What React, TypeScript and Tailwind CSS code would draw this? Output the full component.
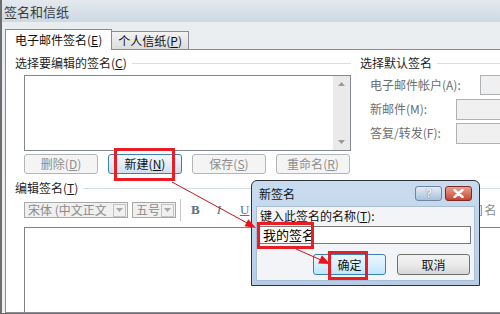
import React from 'react';

const FONT = { fontFamily: '"SimSun", "Noto Sans CJK SC", "Liberation Sans", sans-serif' };

const Mn: React.FC<{ k: string }> = ({ k }) => (
  <span>
    (<span className="underline">{k}</span>)
  </span>
);

const GroupLabel: React.FC<{ text: string; k?: string }> = ({ text, k }) => (
  <div className="flex items-center h-[14px]">
    <span className="text-[12px] leading-[14px] text-[#1e1e1e] whitespace-nowrap">
      {text}
      {k && <Mn k={k} />}
    </span>
    <div className="flex-1 h-px bg-[#d5dfe5] ml-[5px]" />
  </div>
);

const WinButton: React.FC<{ label: string; k: string; disabled?: boolean; primary?: boolean }> = ({ label, k, disabled, primary }) => (
  <div
    className={
      'w-[74px] h-[20px] rounded-[3px] border flex items-center justify-center text-[12px] leading-none whitespace-nowrap ' +
      (disabled
        ? 'border-[#b2b6b9] bg-[#f4f4f4] text-[#8d8d8d]'
        : primary
          ? 'border-[#3c7fb1] bg-gradient-to-b from-[#f4f9fd] via-[#e3eef8] to-[#cfe0ee] text-[#111]'
          : 'border-[#707070] bg-gradient-to-b from-[#f2f2f2] via-[#ebebeb] to-[#d6d6d6] text-[#111]')
    }
  >
    {label}
    <Mn k={k} />
  </div>
);

const ComboArrow: React.FC = () => (
  <div className="w-[13px] h-[13px] border border-[#c4c4c4] bg-[#f0f0f0] flex items-center justify-center">
    <svg width="7" height="4" viewBox="0 0 7 4">
      <polygon points="0,0 7,0 3.5,4" fill="#a8a8a8" />
    </svg>
  </div>
);

export default function App() {
  return (
    <div
      className="relative w-[500px] h-[314px] overflow-hidden bg-[#eef0f2] border-l-2 border-b border-[#6e6e6e] flex flex-col"
      style={FONT}
    >
      {/* window title */}
      <div className="h-[22px] shrink-0 bg-gradient-to-b from-[#e3e9ef] to-[#cdd8e3] flex items-center pl-[2px]">
        <span className="text-[13px] text-[#3b3b3b] leading-none">签名和信纸</span>
      </div>

      <div className="flex-1 flex flex-col pl-[3px] pt-[7px] bg-gradient-to-b from-[#eaedf0] to-[#f0f0f0] min-h-0">
        {/* tabs */}
        <div className="flex items-end h-[21px] shrink-0 relative z-10">
          <div className="h-[21px] bg-white border border-b-0 border-[#898c95] px-[9px] flex items-center text-[12px] text-[#111] whitespace-nowrap">
            电子邮件签名
            <Mn k="E" />
          </div>
          <div className="h-[18px] mb-px border border-l-0 border-b-0 border-[#898c95] bg-gradient-to-b from-[#f3f3f3] to-[#dcdcdc] px-[6px] flex items-center text-[12px] text-[#111] whitespace-nowrap">
            个人信纸
            <Mn k="P" />
          </div>
        </div>

        {/* tab panel */}
        <div className="-mt-px w-[530px] flex-1 bg-white border border-[#898c95] flex flex-col pt-[6px] min-h-0">
          <div className="flex">
            {/* left: signatures */}
            <div className="w-[345px] pl-[9px] flex flex-col shrink-0">
              <GroupLabel text="选择要编辑的签名" k="C" />
              <div className="ml-[9px] mt-[5px] h-[76px] border border-[#828790] flex">
                <div className="flex-1" />
                <div className="w-[17px] bg-[#eaeaea] flex flex-col justify-between items-center py-[6px]">
                  <svg width="7" height="4" viewBox="0 0 7 4">
                    <polygon points="3.5,0 7,4 0,4" fill="#9a9a9a" />
                  </svg>
                  <svg width="7" height="4" viewBox="0 0 7 4">
                    <polygon points="0,0 7,0 3.5,4" fill="#9a9a9a" />
                  </svg>
                </div>
              </div>
              <div className="ml-[9px] mt-[3px] flex gap-[10px]">
                <WinButton label="删除" k="D" disabled />
                <WinButton label="新建" k="N" primary />
                <WinButton label="保存" k="S" disabled />
                <WinButton label="重命名" k="R" disabled />
              </div>
            </div>

            {/* right: defaults */}
            <div className="ml-[9px] flex-1 flex flex-col">
              <GroupLabel text="选择默认签名" />
              <div className="pl-[10px] mt-[5px] flex flex-col gap-[4px] text-[12px] text-[#6d6d6d]">
                <div className="flex items-center h-[20px]">
                  <span className="w-[110px] whitespace-nowrap">电子邮件帐户(A):</span>
                  <div className="h-[20px] w-[100px] border border-[#adb2b5] bg-[#f0f0f0]" />
                </div>
                <div className="flex items-center h-[20px]">
                  <span className="w-[86px] whitespace-nowrap">新邮件(M):</span>
                  <div className="h-[21px] w-[100px] border border-[#adb2b5] bg-[#f0f0f0]" />
                </div>
                <div className="flex items-center h-[20px]">
                  <span className="w-[86px] whitespace-nowrap">答复/转发(F):</span>
                  <div className="h-[21px] w-[100px] border border-[#adb2b5] bg-[#f0f0f0]" />
                </div>
              </div>
            </div>
          </div>

          {/* edit signature */}
          <div className="pl-[9px] mt-[7px]">
            <GroupLabel text="编辑签名" k="T" />
          </div>
          <div className="ml-[18px] mt-[7px] h-[16px] flex items-center text-[12px]">
            <div className="w-[104px] h-[16px] border border-[#a9a9a9] bg-[#f0f0f0] flex items-center justify-between pl-[3px] pr-px text-[#8a8a8a] whitespace-nowrap overflow-hidden">
              <span>宋体 (中文正文</span>
              <ComboArrow />
            </div>
            <div className="ml-[4px] w-[44px] h-[16px] border border-[#a9a9a9] bg-[#f0f0f0] flex items-center justify-between pl-[3px] pr-px text-[#8a8a8a]">
              <span>五号</span>
              <ComboArrow />
            </div>
            <div className="ml-[4px] w-px h-[22px] bg-[#c9c9c9]" />
            <span className="ml-[10px] text-[13px] font-bold text-[#5a6d93]" style={{ fontFamily: '"Liberation Serif", serif' }}>B</span>
            <span className="ml-[17px] text-[13px] italic text-[#5a6d93]" style={{ fontFamily: '"Liberation Serif", serif' }}>I</span>
            <span className="ml-[19px] text-[13px] underline text-[#5a6d93]" style={{ fontFamily: '"Liberation Serif", serif' }}>U</span>
            <div className="ml-[228px] w-[5px] h-[11px] border border-[#8aa0c0] bg-[#dfe8f3]" />
            <span className="ml-[2px] text-[#8a8a8a] whitespace-nowrap">名</span>
          </div>
          <div className="ml-[18px] mt-[9px] flex-1 border border-[#828282] border-b-0" />
        </div>
      </div>

      {/* dialog: new signature */}
      <div className="absolute left-[249px] top-[180px] w-[229px] h-[106px] border border-[#2f3338] rounded-t-[6px] bg-gradient-to-b from-[#c9dcef] to-[#b7cde5] flex flex-col z-20">
        <div className="h-[25px] shrink-0 flex items-center pl-[7px] pr-[7px]">
          <span className="text-[12px] text-[#111]">新签名</span>
          <div className="ml-auto flex gap-[3px]">
            <div className="w-[27px] h-[15px] rounded-[3px] border border-[#6d84a3] bg-gradient-to-b from-[#e3ecf6] to-[#a9c0db] flex items-center justify-center">
              <span className="text-[11px] font-bold text-white leading-none" style={{ fontFamily: '"Liberation Sans", sans-serif', textShadow: '0 0 1px #334' }}>?</span>
            </div>
            <div className="w-[27px] h-[15px] rounded-[3px] border border-[#7a2a22] bg-gradient-to-b from-[#e8a093] to-[#c5422f] flex items-center justify-center">
              <svg width="11" height="9" viewBox="0 0 11 9">
                <path d="M1.5 1 L9.5 8 M9.5 1 L1.5 8" stroke="#fff" strokeWidth="2.4" strokeLinecap="round" />
              </svg>
            </div>
          </div>
        </div>
        <div className="flex-1 mx-[4px] mb-[4px] bg-[#f2f4f7] border border-[#a9bdd4] flex flex-col">
          <span className="ml-[3px] mt-[2px] text-[12px] leading-[14px] text-[#111] whitespace-nowrap">
            键入此签名的名称
            <Mn k="T" />:
          </span>
          <div className="ml-px mt-[3px] w-[213px] h-[18px] border border-[#7a7a7a] bg-white flex items-center pl-[4px] text-[13px] text-[#000]">
            我的签名
          </div>
          <div className="mt-[10px] flex gap-[11px] pl-[56px]">
            <div className="w-[73px] h-[21px] rounded-[3px] border border-[#3c7fb1] bg-gradient-to-b from-[#eaf6fd] via-[#d9f0fc] to-[#bee6fd] flex items-center justify-center text-[12px] text-[#111]">
              确定
            </div>
            <div className="w-[73px] h-[21px] rounded-[3px] border border-[#707070] bg-gradient-to-b from-[#f2f2f2] via-[#ebebeb] to-[#d6d6d6] flex items-center justify-center text-[12px] text-[#111]">
              取消
            </div>
          </div>
        </div>
      </div>

      {/* highlight boxes */}
      <div className="absolute left-[112px] top-[148px] w-[61px] h-[33px] border-[3px] border-[#ea1d25] z-30" />
      <div className="absolute left-[255px] top-[222px] w-[57px] h-[27px] border-[3px] border-[#ea1d25] z-30" />
      <div className="absolute left-[326px] top-[251px] w-[40px] h-[29px] border-[3px] border-[#ea1d25] z-30" />

      {/* arrows */}
      <svg className="absolute left-[-2px] top-0 z-40 pointer-events-none" width="500" height="314" viewBox="0 0 500 314">
        <line x1="172" y1="182" x2="248" y2="223.5" stroke="#c4161c" strokeWidth="1" />
        <polygon points="256,228 244.5,226.2 248.3,219.2" fill="#e8141b" />
        <line x1="296" y1="249" x2="321" y2="260" stroke="#c4161c" strokeWidth="1" />
        <polygon points="330,264 318.1,263.4 321.9,255.2" fill="#e8141b" />
      </svg>
    </div>
  );
}
